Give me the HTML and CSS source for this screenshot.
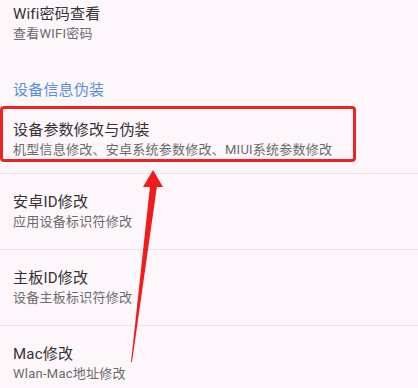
FILE: index.html
```html
<!DOCTYPE html>
<html lang="zh-CN">
<head>
<meta charset="utf-8">
<link rel="stylesheet" href="styles.css">
</head>
<body>
<div class="list">
  <div class="item first">
    <div class="title">Wifi密码查看</div>
    <div class="sub">查看WIFI密码</div>
  </div>
  <div class="header">设备信息伪装</div>
  <div class="item boxed">
    <div class="title">设备参数修改与伪装</div>
    <div class="sub">机型信息修改、安卓系统参数修改、MIUI系统参数修改</div>
    <div class="highlight"></div>
  </div>
  <div class="item">
    <div class="title">安卓ID修改</div>
    <div class="sub">应用设备标识符修改</div>
  </div>
  <div class="item">
    <div class="title">主板ID修改</div>
    <div class="sub">设备主板标识符修改</div>
  </div>
  <div class="item">
    <div class="title">Mac修改</div>
    <div class="sub">Wlan-Mac地址修改</div>
  </div>
</div>
<svg class="arrow" width="418" height="388" viewBox="0 0 418 388">
  <polygon points="153,170 143,187 163,187" fill="#f01b1b"/>
  <polygon points="150,186 157,186 132,362 131,362" fill="#f01b1b"/>
</svg>
</body>
</html>
```
FILE: styles.css
```css
html, body {
  margin: 0;
  padding: 0;
}
body {
  width: 418px;
  height: 388px;
  overflow: hidden;
  background: #fdf7fc;
  font-family: "Roboto", "Noto Sans CJK SC", sans-serif;
  position: relative;
}
.list {
  display: flex;
  flex-direction: column;
}
.item {
  padding: 18px 13px 17px;
  border-bottom: 1px solid #ebe4ea;
  position: relative;
}
.item.first {
  padding-top: 4px;
  padding-bottom: 0;
  height: 40px;
  border-bottom: none;
}
.item.boxed {
  padding-bottom: 13px;
  border-bottom: 1px solid #ebe4ea;
}
.title {
  font-size: 15px;
  line-height: 20px;
  color: #333333;
  letter-spacing: 0.2px;
}
.sub {
  font-size: 13px;
  line-height: 20px;
  color: #6a6a6a;
  letter-spacing: 0.25px;
}
.header {
  padding: 36px 13px 2px;
  font-size: 15px;
  line-height: 20px;
  color: #5b8fdc;
  letter-spacing: 0.2px;
}
.highlight {
  position: absolute;
  left: 0;
  top: 4px;
  width: 356px;
  height: 56px;
  box-sizing: border-box;
  border: 3px solid #ec2323;
  border-radius: 4px;
}
.arrow {
  position: absolute;
  left: 0;
  top: 0;
}
```
